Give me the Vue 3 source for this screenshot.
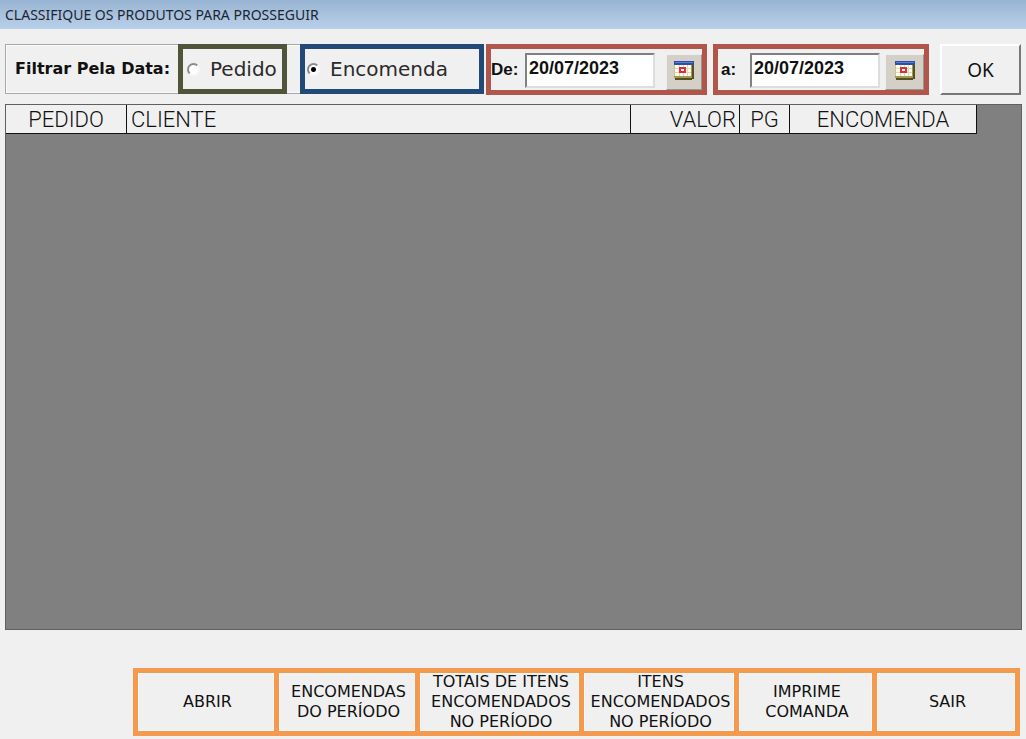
<script setup>
import { ref } from 'vue'

const mode = ref('encomenda')
const dates = ref([
  { id: 'from', label: 'De:', value: '20/07/2023' },
  { id: 'to', label: 'a:', value: '20/07/2023' },
])
const columns = [
  { key: 'pedido', label: 'PEDIDO' },
  { key: 'cliente', label: 'CLIENTE' },
  { key: 'valor', label: 'VALOR' },
  { key: 'pg', label: 'PG' },
  { key: 'encomenda', label: 'ENCOMENDA' },
]
const actions = [
  ['ABRIR'],
  ['ENCOMENDAS', 'DO PERÍODO'],
  ['TOTAIS DE ITENS', 'ENCOMENDADOS', 'NO PERÍODO'],
  ['ITENS', 'ENCOMENDADOS', 'NO PERÍODO'],
  ['IMPRIME', 'COMANDA'],
  ['SAIR'],
]
</script>

<template>
  <div class="window">
    <header class="titlebar">
      <h1>CLASSIFIQUE OS PRODUTOS PARA PROSSEGUIR</h1>
    </header>

    <form class="toolbar" @submit.prevent>
      <div class="filter" role="radiogroup" aria-labelledby="filter-title">
        <span id="filter-title" class="filter-title">Filtrar Pela Data:</span>
        <label class="option option-green">
          <input v-model="mode" type="radio" name="mode" value="pedido" />
          <span>Pedido</span>
        </label>
        <label class="option option-blue">
          <input v-model="mode" type="radio" name="mode" value="encomenda" />
          <span>Encomenda</span>
        </label>
      </div>

      <div v-for="date in dates" :key="date.id" class="date" :class="date.id">
        <label :for="date.id">{{ date.label }}</label>
        <input :id="date.id" v-model="date.value" type="text" />
        <button type="button" class="picker" aria-label="Calendário">
          <svg width="20" height="19" viewBox="0 0 20 19" shape-rendering="crispEdges" aria-hidden="true">
            <path d="M1 17h17v2H1zM18 3h2v15h-2z" fill="#55511f" />
            <path d="M0 15h18v2H0zM17 3h1v14h-1z" fill="#a39c58" />
            <path d="M0 4h1v11H0z" fill="#c9c48c" />
            <path d="M1 4h16v11H1z" fill="#fffef0" />
            <path d="M5 4h1v11H5zM9 4h1v11H9zM13 4h1v11h-1zM1 7h16v1H1zM1 11h16v1H1z" fill="#dcd9ac" />
            <path d="M0 0h20v4H0z" fill="#2a4fa8" />
            <path d="M1 1h18v1H1z" fill="#5580d2" />
            <path d="M5 6h7v6H5z" fill="#d9303c" />
            <path d="M7 8h3v2H7z" fill="#fff" />
          </svg>
        </button>
      </div>

      <button type="submit" class="ok">OK</button>
    </form>

    <main class="grid">
      <table>
        <thead>
          <tr>
            <th v-for="c in columns" :key="c.key" scope="col" :class="c.key">{{ c.label }}</th>
          </tr>
        </thead>
      </table>
    </main>

    <footer class="actions">
      <button v-for="lines in actions" :key="lines.join(' ')" type="button">
        <span v-for="line in lines" :key="line">{{ line }}</span>
      </button>
    </footer>
  </div>
</template>

<style>
body {
  margin: 0;
  background: #f0f0f0;
}
</style>

<style scoped>
* {
  box-sizing: border-box;
}
.window {
  display: flex;
  flex-direction: column;
  min-height: 100vh;
  background: #f0f0f0;
  color: #111;
  font-family: "DejaVu Sans", Verdana, sans-serif;
}
button,
input {
  font: inherit;
  color: inherit;
  border-radius: 0;
}
.titlebar {
  height: 29px;
  padding: 0 5px;
  background: linear-gradient(#98b4d2, #b9d0ea);
}
.titlebar h1 {
  margin: 0;
  font: 400 14px/30px "Noto Sans", "Open Sans", sans-serif;
  color: #1c2530;
}
.toolbar {
  display: flex;
  align-items: flex-start;
  padding: 15px 5px 9px;
}
.filter {
  display: flex;
  flex: 1;
  height: 50px;
  margin-right: 2px;
  box-shadow: inset 0 0 0 1px #a8a8a8, inset 0 0 0 2px #fafafa;
}
.filter-title {
  flex: none;
  width: 173px;
  padding-left: 10px;
  font-size: 16px;
  font-weight: 700;
  line-height: 50px;
  white-space: nowrap;
}
.option {
  display: flex;
  align-items: center;
  gap: 10px;
  padding-left: 4px;
  border: 5px solid;
  font-size: 20px;
}
.option span {
  color: #2b2b2b;
}
.option-green {
  flex: none;
  width: 109px;
  margin-right: 13px;
  border-color: #4f5539;
}
.option-blue {
  flex: 1;
  padding-left: 2px;
  border-color: #214a77;
}
.option input {
  appearance: none;
  flex: none;
  width: 13px;
  height: 13px;
  margin: 0;
  border: 2px solid;
  border-color: #8a8a8a #f6f6f6 #f6f6f6 #8a8a8a;
  border-radius: 50%;
  background: #fff;
}
.option input:checked {
  background: radial-gradient(circle, #000 0 2px, #fff 3px);
}
.date {
  display: flex;
  height: 51px;
  width: 221px;
  border: 5px solid #b0564c;
}
.date label {
  flex: none;
  width: 34px;
  font-size: 17px;
  font-weight: 700;
  font-family: "Liberation Sans", Arial, sans-serif;
  line-height: 41px;
}
.date.to {
  width: 216px;
  margin-left: 6px;
}
.date.to label {
  width: 32px;
  padding-left: 3px;
}
.date input {
  flex: 1;
  min-width: 0;
  height: 35px;
  margin-top: 4px;
  padding: 0 2px 4px;
  border: 2px solid;
  border-color: #808080 #ddd #ddd #808080;
  background: #fff;
  font: 700 18px "Liberation Sans", Arial, sans-serif;
}
.picker {
  display: grid;
  place-items: center;
  flex: none;
  width: 36px;
  height: 36px;
  margin: 5px 0 0 11px;
  padding: 0 0 4px;
  border: 1px solid;
  border-color: #eee #9a968e #9a968e #eee;
  background: #d4d0c8;
}
.date.to .picker {
  width: 39px;
  margin-left: 5px;
}
.ok {
  width: 81px;
  height: 51px;
  margin-left: 11px;
  padding: 0;
  border: 2px solid;
  border-color: #fff #777 #777 #fff;
  background: #f0f0f0;
  font: 400 19px "Noto Sans", "Open Sans", sans-serif;
}
.grid {
  flex: 1;
  margin: 0 4px 0 5px;
  border: 1px solid #606060;
  background: #808080;
}
table {
  width: calc(100% - 44px);
  table-layout: fixed;
  border-collapse: separate;
  border-spacing: 0;
}
th {
  height: 29px;
  padding: 1px 4px 0;
  border-right: 1px solid #111;
  border-bottom: 1px solid #111;
  background: #f0f0f0;
  font: 300 22px/27px Roboto, sans-serif;
  text-align: center;
}
th.pedido {
  width: 121px;
}
th.cliente {
  text-align: left;
}
th.valor {
  width: 109px;
  padding-right: 3px;
  text-align: right;
}
th.pg {
  width: 50px;
}
th.encomenda {
  width: 187px;
}
.actions {
  display: grid;
  grid-template-columns: 136fr 136fr 159fr 150fr 133fr 138fr;
  gap: 5px;
  margin: 38px 6px 3px 133px;
  padding: 5px;
  background: #f39a4e;
}
.actions button {
  display: flex;
  flex-direction: column;
  align-items: center;
  justify-content: center;
  height: 58px;
  padding: 0 0 0 3px;
  border: 1px solid #f8f8f8;
  background: #f0f0f0;
  font-size: 16px;
  line-height: 20px;
  white-space: nowrap;
}
</style>
